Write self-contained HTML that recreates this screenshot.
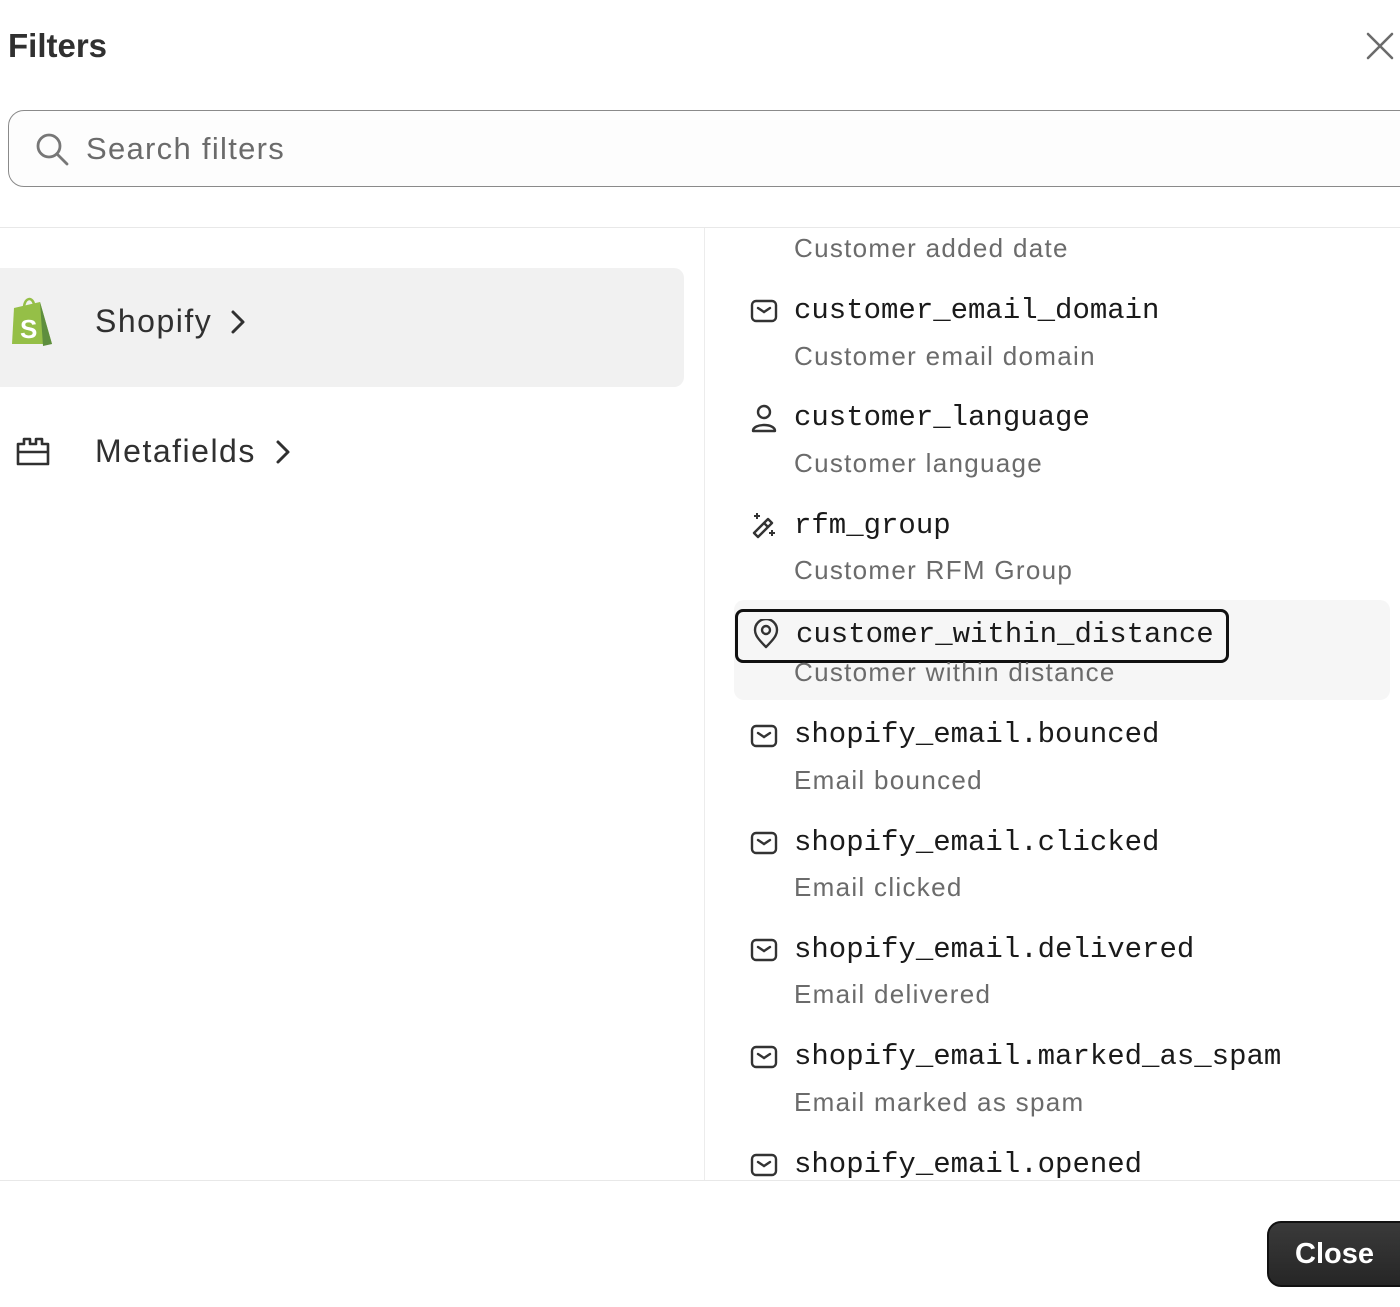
<!DOCTYPE html>
<html><head><meta charset="utf-8"><style>
html,body{margin:0;padding:0;background:#fff;width:1400px;height:1307px;overflow:hidden;position:relative;font-family:"Liberation Sans",sans-serif}
.a{position:absolute;white-space:nowrap;line-height:1.15}
.m{font-family:"Liberation Mono",monospace;font-size:29px;color:#1a1a1a}
.l{font-size:26px;color:#6b6b6b;letter-spacing:1.3px}
svg{position:absolute}
</style></head><body>
<div class="a" style="left:8px;top:27px;font-size:33px;font-weight:bold;color:#303030">Filters</div>
<svg style="left:1366px;top:32px" width="28" height="28" viewBox="0 0 28 28"><path d="M2 2L26 26M26 2L2 26" stroke="#6b6b6b" stroke-width="2.6" stroke-linecap="round"/></svg>
<div style="position:absolute;left:8px;top:110px;width:1410px;height:75px;border:1.5px solid #8a8a8a;border-radius:16px;background:#fdfdfd"></div>
<svg style="left:34px;top:131px" width="36" height="36" viewBox="0 0 36 36"><circle cx="15" cy="15" r="11" fill="none" stroke="#777" stroke-width="2.8"/><path d="M23 23L33 33" stroke="#777" stroke-width="2.8" stroke-linecap="round"/></svg>
<div class="a" style="left:86px;top:131px;font-size:31px;color:#6b6b6b;letter-spacing:1.3px">Search filters</div>
<div style="position:absolute;left:0;top:227px;width:1400px;height:1px;background:#e8e8e8"></div>
<div style="position:absolute;left:704px;top:228px;width:1px;height:952px;background:#ececec"></div>
<div style="position:absolute;left:0;top:1180px;width:1400px;height:1px;background:#e8e8e8"></div>
<div style="position:absolute;left:0;top:268px;width:684px;height:119px;background:#f1f1f1;border-radius:0 10px 10px 0"></div>
<svg style="left:10px;top:296px" width="46" height="52" viewBox="0 0 46 52"><path d="M4 12L30 6L42 48L2 48Z" fill="#95bf47"/><path d="M30 6L42 48L33 50Z" fill="#5e8e3e"/><path d="M14 12C14 2 22 0 24 8" fill="none" stroke="#95bf47" stroke-width="2.5"/><text x="10" y="42" font-family="Liberation Sans" font-weight="bold" font-size="26" fill="#fff">S</text></svg>
<div class="a" style="left:95px;top:303px;font-size:32px;color:#303030;letter-spacing:1.5px">Shopify</div>
<svg style="left:229px;top:309px" width="18" height="26" viewBox="0 0 18 26"><path d="M4 3L14 13L4 23" fill="none" stroke="#303030" stroke-width="3" stroke-linecap="round" stroke-linejoin="round"/></svg>
<svg style="left:14px;top:436px" width="38" height="32" viewBox="0 0 38 32"><path d="M4 8H10V3H16V8H22V3H28V8H34V28H4Z M4 16H34" fill="none" stroke="#303030" stroke-width="2.6" stroke-linejoin="round"/></svg>
<div class="a" style="left:95px;top:433px;font-size:32px;color:#303030;letter-spacing:1.5px">Metafields</div>
<svg style="left:274px;top:439px" width="18" height="26" viewBox="0 0 18 26"><path d="M4 3L14 13L4 23" fill="none" stroke="#303030" stroke-width="3" stroke-linecap="round" stroke-linejoin="round"/></svg>

<div style="position:absolute;left:734px;top:600px;width:656px;height:100px;background:#f6f6f6;border-radius:10px"></div>
<div style="position:absolute;left:735px;top:609px;width:488px;height:48px;border:3px solid #111;border-radius:8px"></div>

<div class="a l" style="left:794px;top:234px">Customer added date</div>

<svg style="left:750px;top:299px" width="28" height="24" viewBox="0 0 28 24"><rect x="2" y="2" width="24" height="20" rx="4" fill="none" stroke="#333" stroke-width="2.4"/><path d="M8 9L14 13L20 9" fill="none" stroke="#333" stroke-width="2.4" stroke-linecap="round"/></svg>
<div class="a m" style="left:794px;top:294px">customer_email_domain</div>
<div class="a l" style="left:794px;top:342px">Customer email domain</div>

<svg style="left:750px;top:403px" width="28" height="30" viewBox="0 0 28 30"><circle cx="14" cy="9" r="6" fill="none" stroke="#333" stroke-width="2.4"/><path d="M3 28C3 20 25 20 25 28Z" fill="none" stroke="#333" stroke-width="2.4" stroke-linejoin="round"/></svg>
<div class="a m" style="left:794px;top:401px">customer_language</div>
<div class="a l" style="left:794px;top:449px">Customer language</div>

<svg style="left:750px;top:511px" width="28" height="28" viewBox="0 0 28 28"><path d="M4 22L18 8L22 12L8 26Z M14 12L18 16" fill="none" stroke="#333" stroke-width="2.4" stroke-linejoin="round"/><path d="M7 2V8M4 5H10M22 19V25M19 22H25" stroke="#333" stroke-width="2"/></svg>
<div class="a m" style="left:794px;top:509px">rfm_group</div>
<div class="a l" style="left:794px;top:556px">Customer RFM Group</div>

<svg style="left:752px;top:619px" width="28" height="30" viewBox="0 0 28 30"><path d="M14 28C6 20 3 16 3 11A11 11 0 0 1 25 11C25 16 22 20 14 28Z" fill="none" stroke="#333" stroke-width="2.4" stroke-linejoin="round"/><circle cx="14" cy="11" r="4" fill="none" stroke="#333" stroke-width="2.4"/></svg>
<div class="a m" style="left:796px;top:618px">customer_within_distance</div>
<div class="a l" style="left:794px;top:658px">Customer within distance</div>

<svg style="left:750px;top:724px" width="28" height="24" viewBox="0 0 28 24"><rect x="2" y="2" width="24" height="20" rx="4" fill="none" stroke="#333" stroke-width="2.4"/><path d="M8 9L14 13L20 9" fill="none" stroke="#333" stroke-width="2.4" stroke-linecap="round"/></svg>
<div class="a m" style="left:794px;top:718px">shopify_email.bounced</div>
<div class="a l" style="left:794px;top:766px">Email bounced</div>

<svg style="left:750px;top:831px" width="28" height="24" viewBox="0 0 28 24"><rect x="2" y="2" width="24" height="20" rx="4" fill="none" stroke="#333" stroke-width="2.4"/><path d="M8 9L14 13L20 9" fill="none" stroke="#333" stroke-width="2.4" stroke-linecap="round"/></svg>
<div class="a m" style="left:794px;top:826px">shopify_email.clicked</div>
<div class="a l" style="left:794px;top:873px">Email clicked</div>

<svg style="left:750px;top:938px" width="28" height="24" viewBox="0 0 28 24"><rect x="2" y="2" width="24" height="20" rx="4" fill="none" stroke="#333" stroke-width="2.4"/><path d="M8 9L14 13L20 9" fill="none" stroke="#333" stroke-width="2.4" stroke-linecap="round"/></svg>
<div class="a m" style="left:794px;top:933px">shopify_email.delivered</div>
<div class="a l" style="left:794px;top:980px">Email delivered</div>

<svg style="left:750px;top:1045px" width="28" height="24" viewBox="0 0 28 24"><rect x="2" y="2" width="24" height="20" rx="4" fill="none" stroke="#333" stroke-width="2.4"/><path d="M8 9L14 13L20 9" fill="none" stroke="#333" stroke-width="2.4" stroke-linecap="round"/></svg>
<div class="a m" style="left:794px;top:1040px">shopify_email.marked_as_spam</div>
<div class="a l" style="left:794px;top:1088px">Email marked as spam</div>

<svg style="left:750px;top:1153px" width="28" height="24" viewBox="0 0 28 24"><rect x="2" y="2" width="24" height="20" rx="4" fill="none" stroke="#333" stroke-width="2.4"/><path d="M8 9L14 13L20 9" fill="none" stroke="#333" stroke-width="2.4" stroke-linecap="round"/></svg>
<div style="position:absolute;left:794px;top:1140px;width:600px;height:40px;overflow:hidden"><div class="a m" style="left:0;top:8px">shopify_email.opened</div></div>

<div style="position:absolute;left:1267px;top:1221px;width:160px;height:66px;background:linear-gradient(#3a3a3a,#262626);border:2px solid #111;border-radius:14px;box-sizing:border-box"></div>
<div class="a" style="left:1295px;top:1238px;font-size:29px;font-weight:bold;color:#fff">Close</div>
</body></html>
